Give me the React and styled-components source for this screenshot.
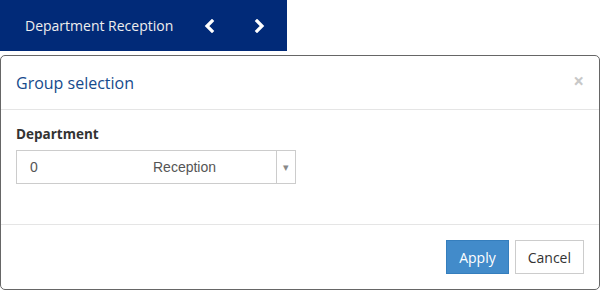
import styled, { createGlobalStyle } from 'styled-components'

const Global = createGlobalStyle`
    body {
        margin: 0;
        background: #fff;
        font-family: 'Open Sans', sans-serif;
    }
`

function Chevron({ dir }) {
    const points = dir === 'left' ? '8,2 3,7 8,12' : '3,2 8,7 3,12'
    return (
        <svg width="11" height="14" viewBox="0 0 11 14">
            <polyline points={points} fill="none" stroke="#fff" strokeWidth="3.2" strokeLinecap="square" />
        </svg>
    )
}

export default function App() {
    return (
        <>
            <Global />
            <Topbar>
                <Title>Department Reception</Title>
                <NavButton><Chevron dir="left" /></NavButton>
                <NavButton><Chevron dir="right" /></NavButton>
            </Topbar>
            <Modal>
                <Header>
                    <h4>Group selection</h4>
                    <Close>×</Close>
                </Header>
                <Body>
                    <Label>Department</Label>
                    <Select>
                        <SelectValue>
                            <span>0</span>
                            <span>Reception</span>
                        </SelectValue>
                        <Arrow>▾</Arrow>
                    </Select>
                </Body>
                <Footer>
                    <Button primary>Apply</Button>
                    <Button>Cancel</Button>
                </Footer>
            </Modal>
        </>
    )
}

const Topbar = styled.div`
    width: 287px;
    height: 51px;
    background: #012a78;
    display: flex;
    align-items: center;
    padding-left: 25px;
    box-sizing: border-box;
    color: #eee;
    font-size: 14px;
`

const Title = styled.span`
    white-space: nowrap;
    flex-shrink: 0;
    margin-right: 31px;
    margin-top: -1px;
`

const NavButton = styled.div`
    width: 50px;
    flex-shrink: 0;
    height: 30px;
    display: flex;
    align-items: center;
`

const Modal = styled.div`
    margin-top: 4px;
    width: 600px;
    height: 235px;
    box-sizing: border-box;
    border: 1px solid #666;
    border-radius: 5px;
    background: #fff;
    display: flex;
    flex-direction: column;
`

const Header = styled.div`
    height: 53px;
    border-bottom: 1px solid #e5e5e5;
    display: flex;
    align-items: center;
    justify-content: space-between;
    padding: 0 15px;

    h4 {
        margin: 0;
        font-size: 16px;
        font-weight: 400;
        color: #154a8c;
    }
`

const Close = styled.span`
    font-size: 19px;
    font-weight: 700;
    color: #c8c8c8;
    line-height: 1;
    margin-top: -3px;
`

const Body = styled.div`
    flex: 1;
    padding: 14px 15px 0;
`

const Label = styled.div`
    font-size: 13.5px;
    font-weight: 700;
    color: #333;
    line-height: 20px;
    margin-bottom: 6px;
`

const Select = styled.div`
    width: 280px;
    height: 34px;
    box-sizing: border-box;
    border: 1px solid #ccc;
    display: flex;
    font-family: 'Liberation Sans', Arial, sans-serif;
    font-size: 14px;
    color: #555;
`

const SelectValue = styled.div`
    flex: 1;
    display: flex;
    align-items: center;
    padding-left: 13px;
    margin-top: -1px;

    span:first-child {
        width: 123px;
    }
`

const Arrow = styled.div`
    width: 18px;
    border-left: 1px solid #ccc;
    display: flex;
    align-items: center;
    justify-content: center;
    font-size: 11px;
    color: #888;
`

const Footer = styled.div`
    border-top: 1px solid #e5e5e5;
    padding: 15px 15px 15px;
    display: flex;
    justify-content: flex-end;
    gap: 6px;
`

const Button = styled.button`
    height: 34px;
    padding: 0 12px;
    font-family: 'Open Sans', sans-serif;
    font-size: 14px;
    border-radius: 0;
    border: 1px solid ${p => p.primary ? '#357ebd' : '#ccc'};
    background: ${p => p.primary ? '#428bca' : '#fff'};
    color: ${p => p.primary ? '#fff' : '#333'};
`
